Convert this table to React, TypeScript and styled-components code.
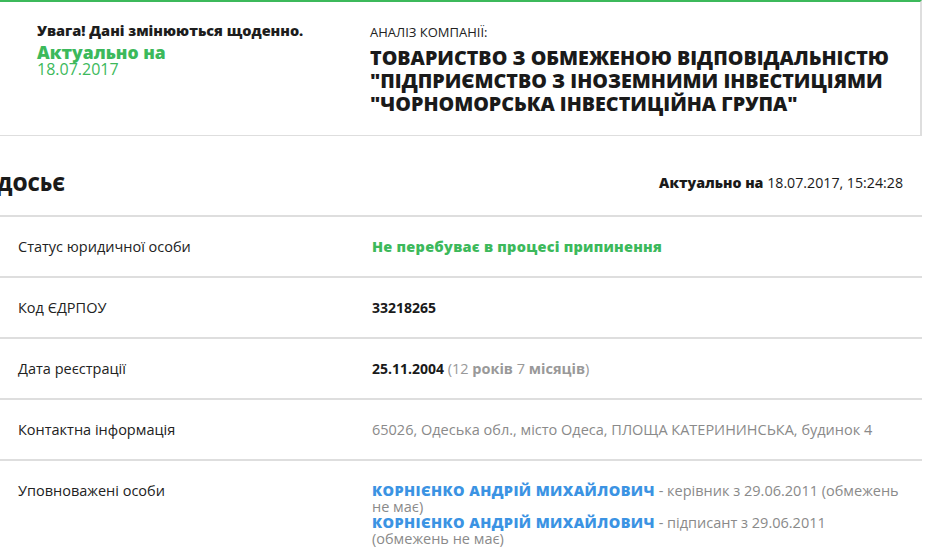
import styled, { createGlobalStyle } from "styled-components";

const GlobalStyle = createGlobalStyle`
  body {
    margin: 0;
    background: #fff;
    font-family: "Open Sans", "Liberation Sans", sans-serif;
    color: #222;
  }
`;

const green = "#3cb95b";
const blue = "#3b93e3";
const line = "#dedede";

type Person = { name: string; role: string; since: string };

const persons: Person[] = [
  { name: "КОРНІЄНКО АНДРІЙ МИХАЙЛОВИЧ", role: "керівник", since: "29.06.2011" },
  { name: "КОРНІЄНКО АНДРІЙ МИХАЙЛОВИЧ", role: "підписант", since: "29.06.2011" },
];

export default function App() {
  return (
    <>
      <GlobalStyle />
      <Page>
        <Card>
          <Notice>
            <Warn>Увага! Дані змінюються щоденно.</Warn>
            <Actual>
              <b>Актуально на</b>
              <span>18.07.2017</span>
            </Actual>
          </Notice>
          <Company>
            <Caption>АНАЛІЗ КОМПАНІЇ:</Caption>
            <Title>
              ТОВАРИСТВО З ОБМЕЖЕНОЮ ВІДПОВІДАЛЬНІСТЮ "ПІДПРИЄМСТВО З ІНОЗЕМНИМИ ІНВЕСТИЦІЯМИ
              "ЧОРНОМОРСЬКА ІНВЕСТИЦІЙНА ГРУПА"
            </Title>
          </Company>
        </Card>

        <DossierHead>
          <Heading>ДОСЬЄ</Heading>
          <Stamp>
            <b>Актуально на</b> 18.07.2017, 15:24:28
          </Stamp>
        </DossierHead>

        <Table>
          <Row>
            <Label>Статус юридичної особи</Label>
            <Value $tone="green">Не перебуває в процесі припинення</Value>
          </Row>
          <Row>
            <Label>Код ЄДРПОУ</Label>
            <Value $tone="dark">33218265</Value>
          </Row>
          <Row>
            <Label>Дата реєстрації</Label>
            <Value $tone="dark">
              25.11.2004{" "}
              <Muted>
                (12 <b>років</b> 7 <b>місяців</b>)
              </Muted>
            </Value>
          </Row>
          <Row>
            <Label>Контактна інформація</Label>
            <Value $tone="gray">
              65026, Одеська обл., місто Одеса, ПЛОЩА КАТЕРИНИНСЬКА, будинок 4
            </Value>
          </Row>
          <Row>
            <Label>Уповноважені особи</Label>
            <People>
              {persons.map((p, i) => (
                <div key={i}>
                  <PersonLink>{p.name}</PersonLink> - {p.role} з {p.since} (обмежень не має)
                </div>
              ))}
            </People>
          </Row>
        </Table>
      </Page>
    </>
  );
}

const Page = styled.div`
  width: 922px;
`;

const Card = styled.section`
  display: grid;
  grid-template-columns: 333px 1fr;
  padding: 20px 0 20px 37px;
  border-top: 2px solid ${green};
  border-right: 2px solid ${line};
  border-bottom: 1px solid ${line};
`;

const Notice = styled.div`
  display: flex;
  flex-direction: column;
  gap: 4px;
`;

const Warn = styled.div`
  font-size: 14.5px;
  line-height: 18px;
  font-weight: 800;
  color: #1d1d1d;
`;

const Actual = styled.div`
  display: flex;
  flex-direction: column;
  color: ${green};
  b { font-size: 17.5px; line-height: 17px; font-weight: 800; }
  span { font-size: 16px; line-height: 17px; font-weight: 500; }
`;

const Company = styled.div`
  display: flex;
  flex-direction: column;
  gap: 6px;
  padding-top: 2px;
`;

const Caption = styled.div`
  font-size: 13px;
  line-height: 16px;
  color: #222;
`;

const Title = styled.h1`
  margin: 0;
  font-size: 19.7px;
  line-height: 23px;
  font-weight: 800;
  color: #1a1a1a;
  max-width: 540px;
`;

const DossierHead = styled.div`
  display: flex;
  align-items: center;
  justify-content: space-between;
  height: 65px;
  padding: 14px 19px 0 0;
  border-bottom: 2px solid ${line};
`;

const Heading = styled.h2`
  margin: 0 0 0 -3px;
  padding-top: 2px;
  font-size: 19px;
  font-weight: 800;
  color: #1a1a1a;
`;

const Stamp = styled.div`
  font-size: 14.2px;
  color: #1a1a1a;
  b { font-weight: 800; }
`;

const Table = styled.div`
  display: flex;
  flex-direction: column;
`;

const Row = styled.div`
  display: grid;
  grid-template-columns: 354px 530px;
  align-items: start;
  padding: 20px 0 20px 18px;
  min-height: 19px;
  border-bottom: 2px solid ${line};
`;

const Label = styled.div`
  font-size: 14.5px;
  line-height: 19px;
  color: #222;
`;

const tones = {
  green: `color: ${green}; font-weight: 800; letter-spacing: 0.25px;`,
  dark: `color: #1a1a1a; font-weight: 700; font-size: 14px;`,
  gray: `color: #8a8a8a; font-weight: 400;`,
};

const Value = styled.div<{ $tone: keyof typeof tones }>`
  font-size: 14.5px;
  line-height: 19px;
  ${({ $tone }) => tones[$tone]}
`;

const Muted = styled.span`
  color: #999;
  font-weight: 400;
  font-size: 14.5px;
  b { font-weight: 700; }
`;

const People = styled.div`
  font-size: 14.5px;
  line-height: 16px;
  color: #8a8a8a;
  padding-top: 2px;
`;

const PersonLink = styled.span`
  color: ${blue};
  font-weight: 800;
  letter-spacing: 0.4px;
  cursor: pointer;
`;
